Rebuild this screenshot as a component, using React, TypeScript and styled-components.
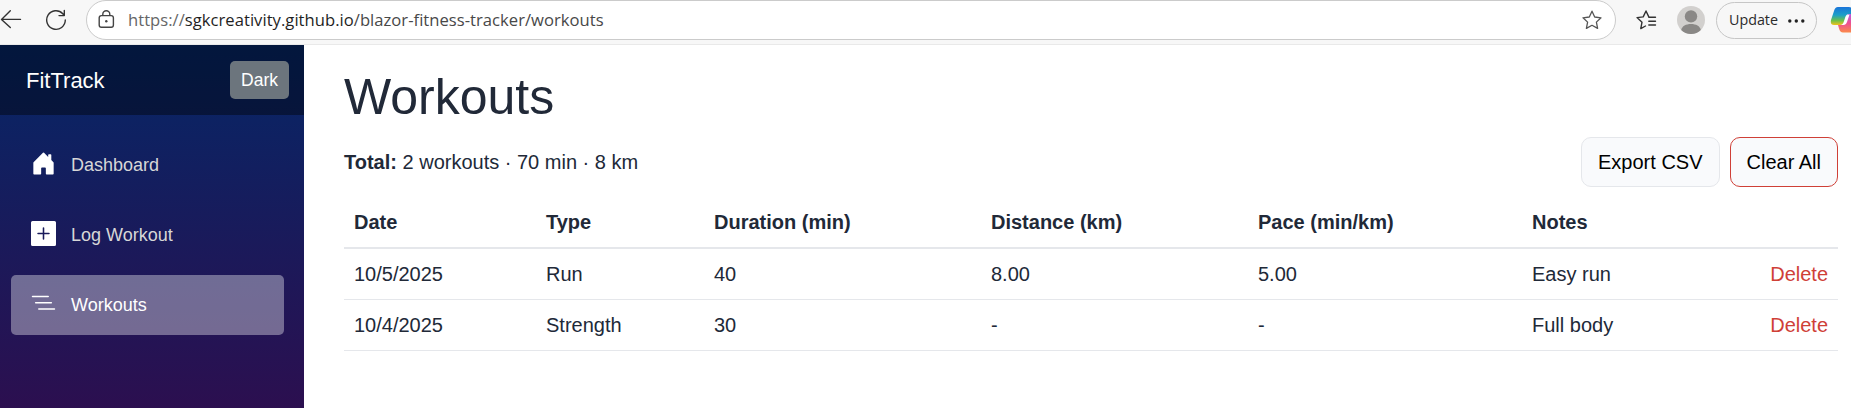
import React from "react";
import styled, { createGlobalStyle } from "styled-components";

const Global = createGlobalStyle`
  *, *::before, *::after { box-sizing: border-box; }
  html, body { margin: 0; overflow: hidden; }
  body {
    font: 20px/30px "Liberation Sans", Arial, sans-serif;
    color: #212938;
    background: #fff;
  }
  button { font-family: inherit; margin: 0; }
`;

const Window = styled.div`
  display: flex;
  flex-direction: column;
  height: 408px;
  overflow: hidden;
`;

const BrowserBar = styled.header`
  display: flex;
  align-items: flex-start;
  height: 45px;
  flex: none;
  background: #f7f7f7;
  border-bottom: 1px solid #e9e9e9;
  font-family: "Open Sans", "Noto Sans", sans-serif;
  overflow: hidden;
`;

const NavIcon = styled.svg<{ $left?: number; $top?: number }>`
  flex: none;
  display: block;
  margin-left: ${(p) => p.$left ?? 0}px;
  margin-top: ${(p) => p.$top ?? 0}px;
`;

const AddressBar = styled.div`
  display: flex;
  align-items: flex-start;
  width: 1530px;
  height: 40px;
  margin-left: 19px;
  flex: none;
  background: #fff;
  border: 1px solid #cbcbcb;
  border-radius: 20px;
`;

const Url = styled.span`
  flex: 1;
  margin-left: 12px;
  font-size: 16.6px;
  line-height: 38px;
  letter-spacing: 0.03px;
  color: #1f1f1f;
  white-space: nowrap;
`;

const Scheme = styled.span`
  color: #666;
`;

const Path = styled.span`
  color: #484848;
`;

const UpdateButton = styled.button`
  display: flex;
  align-items: center;
  flex: none;
  width: 101px;
  height: 37px;
  margin: 2px 0 0 11px;
  padding: 0 11px 2px 12px;
  justify-content: space-between;
  border: 1px solid #c6c6c6;
  border-radius: 19px;
  background: #f7f7f7;
  color: #2b2b2b;
  font-size: 14.3px;
`;

const Page = styled.div`
  display: flex;
  flex: 1;
  min-height: 0;
`;

const Sidebar = styled.aside`
  width: 304px;
  flex: none;
  background: linear-gradient(180deg, rgb(5, 39, 103) 0, #3a0647 497px);
`;

const SidebarTop = styled.div`
  display: flex;
  align-items: center;
  justify-content: space-between;
  height: 70px;
  padding: 0 15px 0 26px;
  background: rgba(0, 0, 0, 0.4);
`;

const Brand = styled.span`
  padding-top: 2px;
  font-size: 22px;
  color: #fff;
`;

const ThemeButton = styled.button`
  width: 59px;
  height: 38px;
  padding: 0;
  border: 0;
  border-radius: 5px;
  background: #6c757d;
  color: #fff;
  font-size: 17.5px;
`;

const Menu = styled.nav`
  display: flex;
  flex-direction: column;
  gap: 10px;
  padding: 20px 20px 0 11px;
`;

const MenuItem = styled.a<{ $active?: boolean }>`
  display: flex;
  align-items: center;
  height: 60px;
  padding-left: 20px;
  gap: 15px;
  border-radius: 5px;
  font-size: 18px;
  color: ${(p) => (p.$active ? "#fff" : "#d7d7d7")};
  background: ${(p) => (p.$active ? "rgba(255, 255, 255, 0.37)" : "transparent")};
`;

const MenuIcon = styled.svg`
  width: 25px;
  height: 25px;
  margin-bottom: 3px;
  flex: none;
`;

const Main = styled.main`
  flex: 1;
  padding: 22px 13px 0 40px;
`;

const Title = styled.h1`
  margin: 0 0 10px;
  font-size: 50px;
  line-height: 60px;
  font-weight: 400;
`;

const Summary = styled.div`
  display: flex;
  align-items: center;
  gap: 10px;
  height: 50px;
  margin-bottom: 10px;
`;

const Totals = styled.div`
  flex: 1;
`;

const ActionButton = styled.button<{ $danger?: boolean }>`
  height: 50px;
  padding: 0 16px;
  border: 1px solid ${(p) => (p.$danger ? "#cf4037" : "#e5e7eb")};
  border-radius: 10px;
  background: #f9fafc;
  color: #000;
  font-size: 20px;
`;

const Table = styled.table`
  width: 1494px;
  table-layout: fixed;
  border-collapse: separate;
  border-spacing: 0;
`;

const Col = styled.col<{ $w: number }>`
  width: ${(p) => p.$w}px;
`;

const Th = styled.th`
  padding: 10px;
  text-align: left;
  font-weight: 700;
  border-bottom: 2px solid #e5e7eb;
`;

const Td = styled.td`
  padding: 10px;
  white-space: nowrap;
  border-bottom: 1px solid #e5e7eb;
`;

const DeleteLink = styled.a`
  display: block;
  text-align: right;
  color: #cf4037;
`;

const columns = [
  { label: "Date", width: 192 },
  { label: "Type", width: 168 },
  { label: "Duration (min)", width: 277 },
  { label: "Distance (km)", width: 267 },
  { label: "Pace (min/km)", width: 274 },
  { label: "Notes", width: 238 },
  { label: "", width: 78 },
];

const workouts = [
  ["10/5/2025", "Run", "40", "8.00", "5.00", "Easy run"],
  ["10/4/2025", "Strength", "30", "-", "-", "Full body"],
];

const STAR =
  "M10 1.2 L12.7 7 L19 7.8 L14.4 12.1 L15.6 18.4 L10 15.3 L4.4 18.4 L5.6 12.1 L1 7.8 L7.3 7 Z";

export default function App() {
  return (
    <Window>
      <Global />
      <BrowserBar>
        <NavIcon width="22" height="20" $top={9} fill="none" stroke="#333" strokeWidth="1.4" strokeLinecap="round" strokeLinejoin="round">
          <path d="M20.5 10.4H1.5M10.3 1.7L1.5 10.4L10.3 18.6" />
        </NavIcon>
        <NavIcon width="22" height="22" $left={23} $top={9} fill="none" stroke="#333" strokeWidth="1.4" strokeLinecap="round" strokeLinejoin="round">
          <path d="M20.3 11A9.3 9.3 0 1 1 17.8 4.7L19.3 6.5M19.3 1.4V6.6H14" />
        </NavIcon>
        <AddressBar>
          <NavIcon width="18" height="20" $left={11} $top={9} fill="none" stroke="#444" strokeWidth="1.4">
            <rect x="1.2" y="5.6" width="14.2" height="11.6" rx="2.2" />
            <path d="M4.8 5.6V4.3a3.5 3.5 0 0 1 7 0V5.6" />
            <circle cx="8.3" cy="11.3" r="1.2" fill="#444" stroke="none" />
          </NavIcon>
          <Url>
            <Scheme>https://</Scheme>sgkcreativity.github.io<Path>/blazor-fitness-tracker/workouts</Path>
          </Url>
          <NavIcon width="20" height="20" viewBox="0 0 20 20" $top={9} fill="none" stroke="#555" strokeWidth="1.3" strokeLinejoin="round">
            <path d={STAR} />
          </NavIcon>
          <NavIcon width="13" height="1" />
        </AddressBar>
        <NavIcon width="21" height="21" $left={20} $top={10} fill="none" stroke="#333" strokeWidth="1.4" strokeLinejoin="round" strokeLinecap="round">
          <path d="M9.5 16L4.8 18.6L6 12.2L1 7.6L7.2 6.9L10 1L12.8 6.9L14.5 7.2M12.8 7.2H19.5M12.8 11.2H19.5M12.8 15H19.5" />
        </NavIcon>
        <NavIcon width="28" height="28" $left={20} $top={6}>
          <circle cx="14" cy="14" r="14" fill="#d2d0ce" />
          <circle cx="14" cy="10.4" r="6.2" fill="#8a8886" />
          <path d="M4.2 24C5 20 9 18 14 18S23 20 23.8 24A14 14 0 0 1 4.2 24Z" fill="#8a8886" />
        </NavIcon>
        <UpdateButton>
          Update
          <NavIcon width="17" height="4" $top={2} fill="#222">
            <circle cx="1.8" cy="2" r="1.7" />
            <circle cx="8.3" cy="2" r="1.7" />
            <circle cx="14.8" cy="2" r="1.7" />
          </NavIcon>
        </UpdateButton>
        <NavIcon width="28" height="28" $left={13} $top={6}>
          <defs>
            <linearGradient id="cool" x1="0" y1="0" x2="0" y2="1">
              <stop offset="0" stopColor="#1a73d9" />
              <stop offset="0.45" stopColor="#1ba0c8" />
              <stop offset="0.75" stopColor="#6cc04a" />
              <stop offset="1" stopColor="#f3c21b" />
            </linearGradient>
            <linearGradient id="warm" x1="0" y1="0" x2="0" y2="1">
              <stop offset="0" stopColor="#b45be0" />
              <stop offset="0.5" stopColor="#ee5090" />
              <stop offset="1" stopColor="#fb8a4a" />
            </linearGradient>
          </defs>
          <path d="M18 8H26V26.500H13Q10 26.500 9 22.500L8 19H12Q15 19 16 15Z" fill="url(#warm)" />
          <path d="M8 1H19Q22 1 23 5L24 8H19Q16 8 15 12L14 15Q13 19 10 19H4Q0 19 1 14L4 5Q5 1 8 1Z" fill="url(#cool)" />
          <path d="M19.500 8.500Q16.500 8.500 15.500 12L14.500 15.500Q13.700 18.500 11.500 19H14Q16.200 19 17 16Z" fill="#fff" />
        </NavIcon>
      </BrowserBar>
      <Page>
        <Sidebar>
          <SidebarTop>
            <Brand>FitTrack</Brand>
            <ThemeButton>Dark</ThemeButton>
          </SidebarTop>
          <Menu>
            <MenuItem>
              <MenuIcon viewBox="0 0 16 16" fill="#fff">
                <path d="M6.5 14.5v-3.505c0-.245.25-.495.5-.495h2c.25 0 .5.25.5.5v3.5a.5.5 0 0 0 .5.5h4a.5.5 0 0 0 .5-.5v-7a.5.5 0 0 0-.146-.354L13 5.793V2.5a.5.5 0 0 0-.5-.5h-1a.5.5 0 0 0-.5.5v1.293L8.354 1.146a.5.5 0 0 0-.708 0l-6 6A.5.5 0 0 0 1.5 7.5v7a.5.5 0 0 0 .5.5h4a.5.5 0 0 0 .5-.5Z" />
              </MenuIcon>
              Dashboard
            </MenuItem>
            <MenuItem>
              <MenuIcon viewBox="0 0 16 16" fill="#fff">
                <path d="M1 0a1 1 0 0 0-1 1v14a1 1 0 0 0 1 1h14a1 1 0 0 0 1-1V1a1 1 0 0 0-1-1H1zm7.500 4.500v3h3a.5.5 0 0 1 0 1h-3v3a.5.5 0 0 1-1 0v-3h-3a.5.5 0 0 1 0-1h3v-3a.5.5 0 0 1 1 0z" />
              </MenuIcon>
              Log Workout
            </MenuItem>
            <MenuItem $active>
              <MenuIcon viewBox="0 0 16 16" fill="#fff">
                <path fillRule="evenodd" d="M4.500 11.5A.5.5 0 0 1 5 11h10a.5.5 0 0 1 0 1H5a.5.5 0 0 1-.5-.5zm-2-4A.5.5 0 0 1 3 7h10a.5.5 0 0 1 0 1H3a.5.5 0 0 1-.5-.5zm-2-4A.5.5 0 0 1 1 3h10a.5.5 0 0 1 0 1H1a.5.5 0 0 1-.5-.5z" />
              </MenuIcon>
              Workouts
            </MenuItem>
          </Menu>
        </Sidebar>
        <Main>
          <Title>Workouts</Title>
          <Summary>
            <Totals>
              <b>Total:</b> 2 workouts · 70 min · 8 km
            </Totals>
            <ActionButton>Export CSV</ActionButton>
            <ActionButton $danger>Clear All</ActionButton>
          </Summary>
          <Table>
            <colgroup>
              {columns.map((c) => (
                <Col key={c.label} $w={c.width} />
              ))}
            </colgroup>
            <thead>
              <tr>
                {columns.map((c) => (
                  <Th key={c.label}>{c.label}</Th>
                ))}
              </tr>
            </thead>
            <tbody>
              {workouts.map((row) => (
                <tr key={row[0]}>
                  {row.map((cell, i) => (
                    <Td key={i}>{cell}</Td>
                  ))}
                  <Td>
                    <DeleteLink>Delete</DeleteLink>
                  </Td>
                </tr>
              ))}
            </tbody>
          </Table>
        </Main>
      </Page>
    </Window>
  );
}
